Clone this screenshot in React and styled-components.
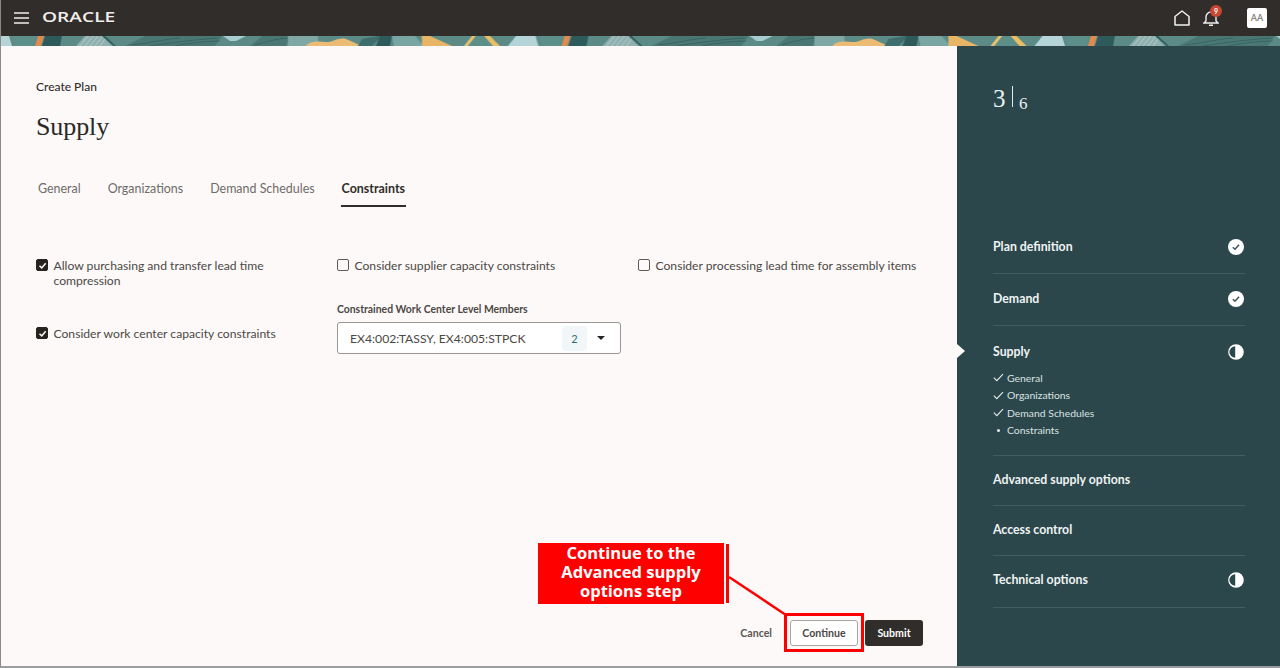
import React from "react";
import styled, { createGlobalStyle } from "styled-components";

const Global = createGlobalStyle`
  html, body { margin: 0; padding: 0; background: #fcf9f8; }
  * { box-sizing: border-box; }
  #root { width: 1280px; height: 668px; overflow: hidden; }
`;
const SANS = `Lato, "Noto Sans", sans-serif`;
const SERIF = `"Liberation Serif", serif`;

const Page = styled.div`
  position: relative; width: 1280px; height: 668px; display: flex; flex-direction: column;
  font-family: ${SANS}; border-left: 1px solid #8a8a8a; border-bottom: 2px solid #9a9e9e;
  background: #fcf9f8; overflow: hidden;
`;
const TopBar = styled.header`
  height: 36px; flex: none; background: #312d2a; display: flex; align-items: center; padding: 0 13px 0 14px; margin-left: -1px;
`;
const MenuButton = styled.svg` width: 15px; height: 12px; flex: none; margin-top: -1px; `;
const Logo = styled.span`
  margin-left: 13px; color: #f1efed; font: 600 13.5px/1 "Open Sans", sans-serif; letter-spacing: 0;
  transform: scaleX(1.42); transform-origin: left center; margin-top: -1px;
`;
const Spacer = styled.div` flex: 1; `;
const IconBtn = styled.div` position: relative; display: flex; width: 18px; height: 18px; margin-right: ${p => p.$mr}px; `;
const Badge = styled.span`
  position: absolute; left: 7px; top: -4px; width: 12px; height: 12px; border-radius: 50%; background: #c74634;
  color: #fff; font: 700 7px/12px ${SANS}; text-align: center;
`;
const Avatar = styled.div`
  width: 20px; height: 20px; border-radius: 2px; background: #fff; color: #8b8783; font: 700 9px/20px ${SANS}; text-align: center;
`;
const Banner = styled.svg` display: block; height: 10px; width: 1280px; flex: none; margin-left: -1px; `;
const Body = styled.div` flex: 1; display: flex; min-height: 0; `;
const Main = styled.main`
  width: 956px; flex: none; display: flex; flex-direction: column; padding: 34px 34px 20px 35px;
`;
const Crumb = styled.div` font-size: 12px; line-height: 14px; color: #312d2a; font-weight: 500; `;
const Title = styled.h1` margin: 18px 0 0; font: 400 26px/30px ${SERIF}; color: #2b2826; letter-spacing: -0.1px; `;
const Tabs = styled.nav` display: flex; gap: 27px; margin-top: 39px; padding-left: 2px; `;
const Tab = styled.div`
  font-size: 12.45px; line-height: 15px; height: 26px; color: ${p => p.$active ? "#312d2a" : "#6f6b68"};
  font-weight: ${p => p.$active ? 700 : 400}; position: relative; padding: 0;
  ${p => p.$active && `&::after { content: ""; position: absolute; left: -1px; right: -1px; bottom: 0; height: 2px; background: #312d2a; }`}
`;
const Grid = styled.div`
  display: grid; grid-template-columns: 301px 301px 1fr; margin-top: 51px; align-items: start;
`;
const Column = styled.div` display: flex; flex-direction: column; `;
const Check = styled.label`
  display: flex; gap: 5.5px; font-size: 12.15px; line-height: 15px; color: #4c4845; width: ${p => p.$w || "auto"};
  margin-top: ${p => p.$mt || 0}px; white-space: ${p => p.$nowrap ? "nowrap" : "normal"};
`;
const Box = styled.span`
  flex: none; width: 12px; height: 12px; margin: 1px 0 0 0; border-radius: 2px; display: flex; align-items: center; justify-content: center;
  background: ${p => p.$on ? "#27231f" : "transparent"}; border: 1.2px solid ${p => p.$on ? "#27231f" : "#5f5b58"};
`;
const FieldLabel = styled.div` margin-top: 30px; font-size: 10.4px; line-height: 13px; font-weight: 700; color: #4c4845; `;
const Select = styled.div`
  margin-top: 6px; width: 284px; height: 32px; border: 1px solid #9a9693; border-radius: 3px; background: #fff;
  display: flex; align-items: center; padding-left: 12px; font-size: 12.2px; color: #4c4845;
`;
const Chip = styled.span`
  margin-left: auto; width: 25px; height: 25px; border-radius: 4px; background: #f1f7f8; color: #2f6c71; font-size: 11px; line-height: 25px; text-align: center;
`;
const Caret = styled.span`
  margin: 0 15px 0 10px; width: 0; height: 0; border-left: 4px solid transparent; border-right: 4px solid transparent; border-top: 4px solid #27231f;
`;
const Footer = styled.div` margin-top: auto; display: flex; align-items: center; justify-content: flex-end; `;
const TextButton = styled.div` font-size: 10.6px; font-weight: 700; color: #5b5754; margin-right: 18px; `;
const OutlineButton = styled.div`
  width: 68px; height: 26px; border: 1px solid #a8a4a1; border-radius: 3px; background: #fff; font-size: 10.6px; font-weight: 700;
  color: #4c4845; line-height: 24px; text-align: center; margin-right: 7px;
`;
const SolidButton = styled.div`
  width: 58px; height: 26px; border-radius: 3px; background: #312d2a; color: #fff; font-size: 10.6px; font-weight: 700; line-height: 26px; text-align: center;
`;
const Side = styled.aside`
  flex: 1; background: #2c474b; padding: 0 35px 0 36px; display: flex; flex-direction: column;
`;
const Counter = styled.div`
  height: 175px; padding-top: 37px; display: flex; align-items: flex-start; color: #e9f1f1; font-family: ${SERIF};
`;
const CNow = styled.span` font-size: 25px; line-height: 32px; `;
const CBar = styled.span` width: 1.5px; height: 21px; background: #dfe9e9; margin: 3px 6px 0 6px; `;
const CTotal = styled.span` font-size: 17px; line-height: 18px; margin-top: 12px; `;
const Step = styled.section`
  position: relative; min-height: ${p => p.$h}px; border-bottom: 1px solid #3f5e61; padding-top: ${p => p.$pt || 18}px;
  ${p => p.$current && `&::before { content: ""; position: absolute; left: -36px; top: 18px; border-left: 8px solid #fcf9f8; border-top: 7px solid transparent; border-bottom: 7px solid transparent; }`}
`;
const StepHead = styled.div`
  display: flex; align-items: center; justify-content: space-between; height: 16px; padding-right: 1px;
  color: #eef3f3; font-size: 12.3px; font-weight: 700; line-height: 16px;
`;
const SubList = styled.ul` list-style: none; margin: 9px 0 0; padding: 0; `;
const SubItem = styled.li`
  display: flex; align-items: center; height: 17.5px; color: #d9e3e3; font-size: 10.4px;
`;
const SubMark = styled.span` width: 14px; flex: none; display: flex; justify-content: center; padding-right: 3px; `;
const Dot = styled.i` width: 3px; height: 3px; border-radius: 50%; background: #e6eeee; `;

const CalloutLayer = styled.div` position: absolute; left: -1px; top: 0; width: 1280px; height: 668px; pointer-events: none; `;
const CalloutBox = styled.div`
  position: absolute; left: 538px; top: 543px; width: 186px; height: 61px; background: #f00; color: #fff; text-align: center;
  font: 700 16.5px/19px "Open Sans", sans-serif; padding-bottom: 4px; display: flex; align-items: center; justify-content: center;
`;
const CalloutLines = styled.svg` position: absolute; left: 0; top: 0; width: 1280px; height: 668px; `;
const Highlight = styled.div` position: absolute; left: 784px; top: 613px; width: 80px; height: 39px; border: 3px solid #f00; `;

const CheckMark = ({ color = "#fff", w = 9 }) => (
  <svg width={w} height={w} viewBox="0 0 12 12" fill="none"><path d="M2 6.4 5 9.2 10.2 3" stroke={color} strokeWidth="2" /></svg>
);
const Done = () => (
  <svg width="16" height="16" viewBox="0 0 16 16"><circle cx="8" cy="8" r="8" fill="#fff" /><path d="M4.8 8.2 7 10.2 11 5.8" fill="none" stroke="#3c5457" strokeWidth="1.5" /></svg>
);
const Partial = () => (
  <svg width="16" height="16" viewBox="0 0 16 16"><circle cx="8" cy="8" r="7.8" fill="#fff" /><path d="M7.2 2.2A5.8 5.8 0 0 0 7.2 13.8Z" fill="#2c474b" /></svg>
);
const SubCheck = () => (
  <svg width="11" height="9" viewBox="0 0 11 9" fill="none"><path d="M.8 4.6 3.8 7.6 10 1.2" stroke="#e6eeee" strokeWidth="1.1" /></svg>
);

const BannerArt = () => (
  <Banner viewBox="0 0 1280 10" preserveAspectRatio="none">
    <defs>
      <pattern id="tile" x="0" y="0" width="526.5" height="10" patternUnits="userSpaceOnUse">
        <rect width="526.5" height="10" fill="#5c8b87" />
        <polygon points="0,0 9,0 12,10 0,10" fill="#b4d4d7" />
        <polygon points="12,0 36,0 33,10 16,10" fill="#5c8f89" />
        <polygon points="45,0 62,0 60,10 42,10" fill="#2e5a5c" />
        <polygon points="38,0 44,0 41,10 35,10" fill="#e08a4e" />
        <polygon points="85,0 102,0 112,10 76,10" fill="#8fb0ae" />
        <g stroke="#c2d4d2" strokeWidth=".7">
          <path d="M80 10 88 0M85 10 93 0M90 10 98 0M95 10 103 0M100 10 105 3" />
        </g>
        <polygon points="102,0 114,10 116,10 105,0" fill="#2e5a5c" />
        <polygon points="125,10 145,0 222,0 215,10" fill="#4a7774" />
        <g stroke="#2f5a5b" strokeWidth=".7" fill="none">
          <path d="M132 9C150 7 165 3 180 2M150 10C170 7 190 4 218 2M175 10C190 7 205 5 220 5" />
        </g>
        <polygon points="223,0 246,0 236,5 230,5" fill="#a6cdcf" />
        <polygon points="250,10 262,0 290,0 286,10" fill="#4a7774" />
        <path d="M255 9C265 6 275 3 288 2" stroke="#2f5a5b" strokeWidth=".7" fill="none" />
        <rect x="288" width="30" height="10" fill="#7fa8a5" />
        <path d="M306 10C310 5 318 5 326 6 332 7 338 1 346 3 352 5 356 8 362 10Z" fill="#ecbb74" />
        <polygon points="362,3 378,0 382,0 372,10 358,10" fill="#3d6d6c" />
        <polygon points="380,0 392,0 390,10 376,10" fill="#2e5a5c" />
        <polygon points="392,0 415,0 424,10 394,10" fill="#79a6a3" />
        <polygon points="422,0 448,10 424,10" fill="#e8b566" />
        <polygon points="424,0 428,0 451,10 446,10" fill="#7fa8a5" />
        <polygon points="422,10 422,0 430,0 452,10" fill="#e8b566" />
        <polygon points="472,0 476,0 468,10 464,10" fill="#e8c06e" />
        <polygon points="484,0 490,0 500,10 493,10" fill="#edbd63" />
        <polygon points="476,0 484,0 492,10 468,10" fill="#5c8f89" />
        <polygon points="516,0 526.5,0 526.5,10 508,10" fill="#b4d4d7" />
      </pattern>
    </defs>
    <rect width="1280" height="10" fill="url(#tile)" />
  </Banner>
);

export default function App() {
  return (
    <Page>
      <Global />
      <TopBar>
        <MenuButton viewBox="0 0 15 12"><path d="M0 1h15M0 6h15M0 11h15" stroke="#efedeb" strokeWidth="1.6" /></MenuButton>
        <Logo>ORACLE</Logo>
        <Spacer />
        <IconBtn $mr={12}>
          <svg width="18" height="18" viewBox="0 0 18 18" fill="none"><path d="M2 7.5 9 2l7 5.5V16H2Z" stroke="#eef3f3" strokeWidth="1.5" strokeLinejoin="round" /></svg>
        </IconBtn>
        <IconBtn $mr={26}>
          <svg width="16" height="18" viewBox="0 0 16 18" fill="none"><path d="M3 12V8a5 5 0 0 1 10 0v4l2 2H1ZM6 16.2h4" stroke="#eef0f0" strokeWidth="1.4" /></svg>
          <Badge>9</Badge>
        </IconBtn>
        <Avatar>AA</Avatar>
      </TopBar>
      <BannerArt />
      <Body>
        <Main>
          <Crumb>Create Plan</Crumb>
          <Title>Supply</Title>
          <Tabs>
            <Tab>General</Tab>
            <Tab>Organizations</Tab>
            <Tab>Demand Schedules</Tab>
            <Tab $active>Constraints</Tab>
          </Tabs>
          <Grid>
            <Column>
              <Check $w="250px"><Box $on><CheckMark /></Box><span>Allow purchasing and transfer lead time compression</span></Check>
              <Check $mt={38}><Box $on><CheckMark /></Box><span>Consider work center capacity constraints</span></Check>
            </Column>
            <Column>
              <Check><Box /><span>Consider supplier capacity constraints</span></Check>
              <FieldLabel>Constrained Work Center Level Members</FieldLabel>
              <Select>EX4:002:TASSY, EX4:005:STPCK<Chip>2</Chip><Caret /></Select>
            </Column>
            <Column>
              <Check $nowrap><Box /><span>Consider processing lead time for assembly items</span></Check>
            </Column>
          </Grid>
          <Footer>
            <TextButton>Cancel</TextButton>
            <OutlineButton>Continue</OutlineButton>
            <SolidButton>Submit</SolidButton>
          </Footer>
        </Main>
        <Side>
          <Counter><CNow>3</CNow><CBar /><CTotal>6</CTotal></Counter>
          <Step $h={53}><StepHead>Plan definition<Done /></StepHead></Step>
          <Step $h={52} $pt={17}><StepHead>Demand<Done /></StepHead></Step>
          <Step $h={130} $current>
            <StepHead>Supply<Partial /></StepHead>
            <SubList>
              <SubItem><SubMark><SubCheck /></SubMark>General</SubItem>
              <SubItem><SubMark><SubCheck /></SubMark>Organizations</SubItem>
              <SubItem><SubMark><SubCheck /></SubMark>Demand Schedules</SubItem>
              <SubItem><SubMark><Dot /></SubMark>Constraints</SubItem>
            </SubList>
          </Step>
          <Step $h={50} $pt={16}><StepHead>Advanced supply options</StepHead></Step>
          <Step $h={50} $pt={16}><StepHead>Access control</StepHead></Step>
          <Step $h={52} $pt={16}><StepHead>Technical options<Partial /></StepHead></Step>
        </Side>
      </Body>
      <CalloutLayer>
        <CalloutBox>Continue to the<br />Advanced supply<br />options step</CalloutBox>
        <CalloutLines viewBox="0 0 1280 668">
          <path d="M727.5 544V603" stroke="#f00" strokeWidth="3" />
          <path d="M729 577 786 615" stroke="#f00" strokeWidth="2.5" />
        </CalloutLines>
        <Highlight />
      </CalloutLayer>
    </Page>
  );
}
